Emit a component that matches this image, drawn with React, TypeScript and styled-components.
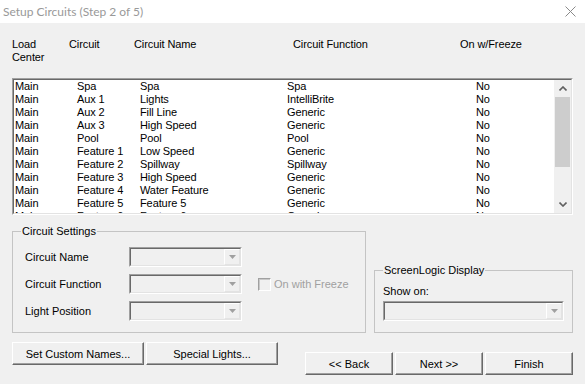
import React from "react";
import styled, { createGlobalStyle } from "styled-components";

const GlobalStyle = createGlobalStyle`
  html, body { margin: 0; padding: 0; background: #f0f0f0; }
  body { width: 585px; height: 384px; overflow: hidden; }
  * { box-sizing: border-box; }
`;

const FONT = `"Liberation Sans", Arial, sans-serif`;

const Window = styled.div`
  width: 585px;
  height: 384px;
  background: #f0f0f0;
  display: flex;
  flex-direction: column;
  font-family: ${FONT};
  font-size: 11px;
  line-height: 13px;
  color: #000;
`;

const TitleBar = styled.div`
  height: 23px;
  background: #fff;
  display: flex;
  align-items: center;
  justify-content: space-between;
  padding: 0 9px 0 3px;
`;

const Title = styled.span`
  font-family: Lato, "Noto Sans", sans-serif;
  font-size: 12px;
  color: #999;
`;

const CloseIcon = styled.svg`
  width: 11px;
  height: 11px;
  display: block;
`;

const Content = styled.div`
  flex: 1;
  display: flex;
  flex-direction: column;
  padding: 15px 12px 0 12px;
`;

const HeaderRow = styled.div`
  display: grid;
  grid-template-columns: 57px 65px 159px 167px 1fr;
  height: 26px;
  letter-spacing: -0.1px;
`;

const HeaderCell = styled.div``;

const ListOuter = styled.div`
  margin-top: 14px;
  height: 137px;
  border: 1px solid;
  border-color: #a0a0a0 #fff #fff #a0a0a0;
`;

const ListInner = styled.div`
  height: 100%;
  display: flex;
  border: 1px solid;
  border-color: #696969 #e3e3e3 #e3e3e3 #696969;
  background: #fff;
`;

const Rows = styled.div`
  flex: 1;
  overflow: hidden;
  padding: 0 0 0 1px;
`;

const Row = styled.div`
  display: grid;
  grid-template-columns: 62px 63px 147px 189px 1fr;
  height: 13px;
  white-space: nowrap;
  letter-spacing: -0.1px;
`;

const ScrollBar = styled.div`
  width: 17px;
  display: flex;
  flex-direction: column;
  background: #f0f0f0;
`;

const ScrollArrow = styled.div`
  height: 17px;
  display: flex;
  align-items: center;
  justify-content: center;
`;

const Track = styled.div`
  flex: 1;
  padding: 0 1px;
`;

const Thumb = styled.div`
  height: 70px;
  background: #cdcdcd;
`;

const GroupsRow = styled.div`
  margin-top: 10px;
  display: flex;
  align-items: flex-end;
  gap: 8px;
`;

const Group = styled.fieldset<{ $w: number; $pt: number; $pb: number }>`
  margin: 0;
  min-width: 0;
  width: ${(p) => p.$w}px;
  border: 1px solid #c4c4c4;
  padding: ${(p) => p.$pt}px 8px ${(p) => p.$pb}px 8px;
`;

const Legend = styled.legend`
  padding: 0 1px;
  line-height: 13px;
`;

const SettingsGrid = styled.div`
  margin-left: 4px;
  display: grid;
  grid-template-columns: 104px 113px auto;
  row-gap: 7px;
  align-items: center;
`;

const Label = styled.div<{ $disabled?: boolean }>`
  color: ${(p) => (p.$disabled ? "#a0a0a0" : "#000")};
  white-space: nowrap;
`;

const ComboOuter = styled.div`
  height: 20px;
  border: 1px solid;
  border-color: #a0a0a0 #fff #fff #a0a0a0;
`;

const ComboInner = styled.div`
  height: 100%;
  display: flex;
  justify-content: flex-end;
  border: 1px solid;
  border-color: #696969 #e3e3e3 #e3e3e3 #696969;
  background: #f0f0f0;
`;

const DropButton = styled.div`
  width: 16px;
  height: 100%;
  border: 1px solid;
  border-color: #fff #e3e3e3 #e3e3e3 #fff;
  display: flex;
  align-items: center;
  justify-content: center;
`;

const CheckRow = styled.div`
  margin-left: 16px;
  display: flex;
  align-items: center;
  gap: 3px;
`;

const CheckBox = styled.div`
  width: 13px;
  height: 13px;
  border: 1px solid;
  border-color: #a0a0a0 #fff #fff #a0a0a0;
  box-shadow: inset 1px 1px 0 #c8c8c8;
  background: #f0f0f0;
`;

const ShowOnLabel = styled.div`
  margin-bottom: 3px;
`;

const ButtonsRow = styled.div`
  margin-top: 9px;
  display: flex;
  justify-content: space-between;
  align-items: flex-start;
`;

const ButtonGroup = styled.div<{ $offset?: number }>`
  display: flex;
  gap: 2px;
  margin-top: ${(p) => p.$offset ?? 0}px;
`;

const Button = styled.button<{ $w: number }>`
  width: ${(p) => p.$w}px;
  height: 23px;
  padding: 0;
  margin: 0;
  font-family: ${FONT};
  font-size: 11px;
  color: #000;
  background: #f0f0f0;
  border: 1px solid;
  border-color: #fff #696969 #696969 #fff;
  box-shadow: inset -1px -1px 0 #a0a0a0;
  display: flex;
  align-items: center;
  justify-content: center;
`;

const rows = [
  ["Main", "Spa", "Spa", "Spa", "No"],
  ["Main", "Aux 1", "Lights", "IntelliBrite", "No"],
  ["Main", "Aux 2", "Fill Line", "Generic", "No"],
  ["Main", "Aux 3", "High Speed", "Generic", "No"],
  ["Main", "Pool", "Pool", "Pool", "No"],
  ["Main", "Feature 1", "Low Speed", "Generic", "No"],
  ["Main", "Feature 2", "Spillway", "Spillway", "No"],
  ["Main", "Feature 3", "High Speed", "Generic", "No"],
  ["Main", "Feature 4", "Water Feature", "Generic", "No"],
  ["Main", "Feature 5", "Feature 5", "Generic", "No"],
  ["Main", "Feature 6", "Feature 6", "Generic", "No"],
];

const Chevron = ({ up }: { up?: boolean }) => (
  <svg width="8" height="5" viewBox="0 0 8 5">
    <polyline
      points={up ? "0.5,4.5 4,1 7.5,4.5" : "0.5,0.5 4,4 7.5,0.5"}
      fill="none"
      stroke="#606060"
      strokeWidth="1.6"
    />
  </svg>
);

const DropArrow = () => (
  <svg width="7" height="4" viewBox="0 0 7 4">
    <polygon points="0,0 7,0 3.5,4" fill="#a0a0a0" />
  </svg>
);

const Combo = () => (
  <ComboOuter>
    <ComboInner>
      <DropButton>
        <DropArrow />
      </DropButton>
    </ComboInner>
  </ComboOuter>
);

export default function App() {
  return (
    <>
      <GlobalStyle />
      <Window>
        <TitleBar>
          <Title>Setup Circuits (Step 2 of 5)</Title>
          <CloseIcon viewBox="0 0 11 11">
            <line x1="0.5" y1="0.5" x2="10.5" y2="10.5" stroke="#8a8a8a" strokeWidth="1" />
            <line x1="10.5" y1="0.5" x2="0.5" y2="10.5" stroke="#8a8a8a" strokeWidth="1" />
          </CloseIcon>
        </TitleBar>
        <Content>
          <HeaderRow>
            <HeaderCell>
              Load
              <br />
              Center
            </HeaderCell>
            <HeaderCell>Circuit</HeaderCell>
            <HeaderCell>Circuit Name</HeaderCell>
            <HeaderCell>Circuit Function</HeaderCell>
            <HeaderCell>On w/Freeze</HeaderCell>
          </HeaderRow>
          <ListOuter>
            <ListInner>
              <Rows>
                {rows.map((r, i) => (
                  <Row key={i}>
                    {r.map((c, j) => (
                      <span key={j}>{c}</span>
                    ))}
                  </Row>
                ))}
              </Rows>
              <ScrollBar>
                <ScrollArrow>
                  <Chevron up />
                </ScrollArrow>
                <Track>
                  <Thumb />
                </Track>
                <ScrollArrow>
                  <Chevron />
                </ScrollArrow>
              </ScrollBar>
            </ListInner>
          </ListOuter>
          <GroupsRow>
            <Group $w={354} $pt={9} $pb={11}>
              <Legend>Circuit Settings</Legend>
              <SettingsGrid>
                <Label>Circuit Name</Label>
                <Combo />
                <span />
                <Label>Circuit Function</Label>
                <Combo />
                <CheckRow>
                  <CheckBox />
                  <Label $disabled>On with Freeze</Label>
                </CheckRow>
                <Label>Light Position</Label>
                <Combo />
                <span />
              </SettingsGrid>
            </Group>
            <Group $w={199} $pt={8} $pb={11}>
              <Legend>ScreenLogic Display</Legend>
              <ShowOnLabel>Show on:</ShowOnLabel>
              <Combo />
            </Group>
          </GroupsRow>
          <ButtonsRow>
            <ButtonGroup>
              <Button $w={132}>Set Custom Names...</Button>
              <Button $w={132}>Special Lights...</Button>
            </ButtonGroup>
            <ButtonGroup $offset={10}>
              <Button $w={88}>&lt;&lt; Back</Button>
              <Button $w={88}>Next &gt;&gt;</Button>
              <Button $w={88}>Finish</Button>
            </ButtonGroup>
          </ButtonsRow>
        </Content>
      </Window>
    </>
  );
}
